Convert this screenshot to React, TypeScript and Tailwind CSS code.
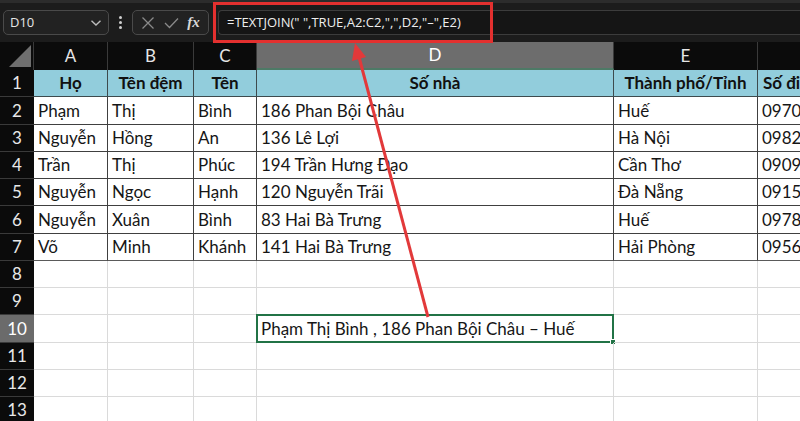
import React from 'react';

const COLS = [
  { key: 'A', w: 74 },
  { key: 'B', w: 86 },
  { key: 'C', w: 63 },
  { key: 'D', w: 357 },
  { key: 'E', w: 144 },
  { key: 'F', w: 120 },
];

const HEADER = ['Họ', 'Tên đệm', 'Tên', 'Số nhà', 'Thành phố/Tỉnh', 'Số điện thoại'];

const DATA = [
  ['Phạm', 'Thị', 'Bình', '186 Phan Bội Châu', 'Huế', '0970123456'],
  ['Nguyễn', 'Hồng', 'An', '136 Lê Lợi', 'Hà Nội', '0982345678'],
  ['Trần', 'Thị', 'Phúc', '194 Trần Hưng Đạo', 'Cần Thơ', '0909876543'],
  ['Nguyễn', 'Ngọc', 'Hạnh', '120 Nguyễn Trãi', 'Đà Nẵng', '0915234567'],
  ['Nguyễn', 'Xuân', 'Bình', '83 Hai Bà Trưng', 'Huế', '0978456123'],
  ['Võ', 'Minh', 'Khánh', '141 Hai Bà Trưng', 'Hải Phòng', '0956789012'],
];

const font = { fontFamily: 'Lato, "Liberation Sans", sans-serif' };

function RowHead({ n, active }: { n: number; active?: boolean }) {
  return (
    <div
      className={`w-[34px] shrink-0 flex items-center justify-center text-[17px] border-b border-[#3a3a3a] ${
        active ? 'bg-[#6b6b6b] text-white' : 'bg-[#0b0b0b] text-[#e8e8e8]'
      }`}
    >
      {n}
    </div>
  );
}

function FormulaBar() {
  return (
    <div className="relative h-[42px] bg-[#1c1c1c] border-t-[3px] border-[#2c2c2c] flex items-center" style={{ fontFamily: '"Open Sans", sans-serif' }}>
      {/* name box */}
      <div className="ml-[3px] w-[106px] h-[25px] rounded-[5px] border border-[#4a4a4a] bg-[#222] flex items-center justify-between px-[6px]">
        <span className="text-[13px] text-[#e6e6e6]">D10</span>
        <svg width="12" height="8" viewBox="0 0 12 8" fill="none" stroke="#bdbdbd" strokeWidth="1.4">
          <path d="M1.5 1.8 L6 6 L10.5 1.8" />
        </svg>
      </div>
      <div className="w-[23px] flex flex-col items-center gap-[2px]">
        <span className="w-[3px] h-[3px] rounded-full bg-[#cfcfcf]" />
        <span className="w-[3px] h-[3px] rounded-full bg-[#cfcfcf]" />
        <span className="w-[3px] h-[3px] rounded-full bg-[#cfcfcf]" />
      </div>
      {/* cancel / enter / fx */}
      <div className="w-[77px] h-[25px] rounded-[5px] border border-[#4a4a4a] bg-[#222] flex items-center justify-around px-[4px]">
        <svg width="14" height="14" viewBox="0 0 14 14" stroke="#8a8a8a" strokeWidth="1.3">
          <path d="M1.5 1.5 L12.5 12.5 M12.5 1.5 L1.5 12.5" />
        </svg>
        <svg width="15" height="12" viewBox="0 0 15 12" fill="none" stroke="#8a8a8a" strokeWidth="1.3">
          <path d="M1 6 L5.5 10.5 L14 1.5" />
        </svg>
        <span className="text-[15px] text-[#d8d8d8] italic font-semibold" style={{ fontFamily: '"Liberation Serif", serif' }}>
          fx
        </span>
      </div>
      {/* formula input */}
      <div className="ml-[9px] flex-1 h-[25px] rounded-l-[4px] border border-r-0 border-[#3c3c3c] bg-[#151515] flex items-center pl-[8px]">
        <span className="text-[13px] text-[#eeeeee] whitespace-nowrap">=TEXTJOIN(" ",TRUE,A2:C2,",",D2,"–",E2)</span>
      </div>
      {/* annotation box */}
      <div className="absolute left-[213px] top-[-1px] w-[280px] h-[41px] border-[3px] border-[#e3302f]" />
    </div>
  );
}

export default function App() {
  const rowH = 'h-[27.25px]';
  return (
    <div className="relative w-[800px] h-[421px] overflow-hidden bg-white" style={font}>
      <FormulaBar />

      {/* column letters */}
      <div className="flex h-[28px] bg-[#0b0b0b]">
        <div className="w-[34px] shrink-0 relative border-r border-[#3a3a3a]">
          <div className="absolute right-[2px] bottom-[3px] w-0 h-0 border-l-[22px] border-l-transparent border-b-[22px] border-b-[#6f6f6f]" />
        </div>
        {COLS.map(c => (
          <div
            key={c.key}
            style={{ width: c.w }}
            className={`shrink-0 flex items-center justify-center text-[17px] border-r border-[#3a3a3a] ${
              c.key === 'D' ? 'bg-[#6d6d6d] text-white border-b-2 border-b-[#4d7a66]' : 'text-[#e6e6e6]'
            }`}
          >
            {c.key}
          </div>
        ))}
      </div>

      {/* row 1 header */}
      <div className={`flex ${rowH}`}>
        <RowHead n={1} />
        {COLS.map((c, i) => (
          <div
            key={c.key}
            style={{ width: c.w }}
            className={`shrink-0 bg-[#92cddc] border-r border-b border-[#3d4a4d] font-bold text-[17px] text-[#111] flex items-center overflow-hidden whitespace-nowrap ${
              i === 5 ? 'justify-start pl-[5px]' : 'justify-center'
            }`}
          >
            {HEADER[i]}
          </div>
        ))}
      </div>

      {/* data rows */}
      {DATA.map((row, r) => (
        <div key={r} className={`flex ${rowH}`}>
          <RowHead n={r + 2} />
          {COLS.map((c, i) => (
            <div
              key={c.key}
              style={{ width: c.w }}
              className={`shrink-0 border-r border-b border-[#404040] text-[17px] text-[#161616] flex items-center pl-[4px] overflow-hidden whitespace-nowrap ${
                r === DATA.length - 1 ? 'border-b-[#5a5a5a]' : ''
              }`}
            >
              {row[i]}
            </div>
          ))}
        </div>
      ))}

      {/* empty rows */}
      {[8, 9, 10, 11, 12, 13].map(n => (
        <div key={n} className={`flex ${rowH}`}>
          <RowHead n={n} active={n === 10} />
          {COLS.map(c => (
            <div
              key={c.key}
              style={{ width: c.w }}
              className="shrink-0 border-r border-b border-[#dadada] relative text-[17px] text-[#161616] flex items-center whitespace-nowrap"
            >
              {n === 10 && c.key === 'D' && (
                <div className="absolute left-[-1px] top-[-1px] right-[-1px] bottom-[-1px] border-2 border-[#217346] flex items-center pl-[3px]">
                  Phạm Thị Bình , 186 Phan Bội Châu – Huế
                  <span className="absolute right-[-4px] bottom-[-4px] w-[6px] h-[6px] bg-[#217346] border border-white" />
                </div>
              )}
            </div>
          ))}
        </div>
      ))}

      {/* annotation arrow */}
      <svg className="absolute left-0 top-0 pointer-events-none" width="800" height="421">
        <line x1="428" y1="317" x2="359" y2="57" stroke="#e2393a" strokeWidth="3" />
        <polygon points="355,43 366,57 352,61" fill="#e2393a" />
      </svg>
    </div>
  );
}
